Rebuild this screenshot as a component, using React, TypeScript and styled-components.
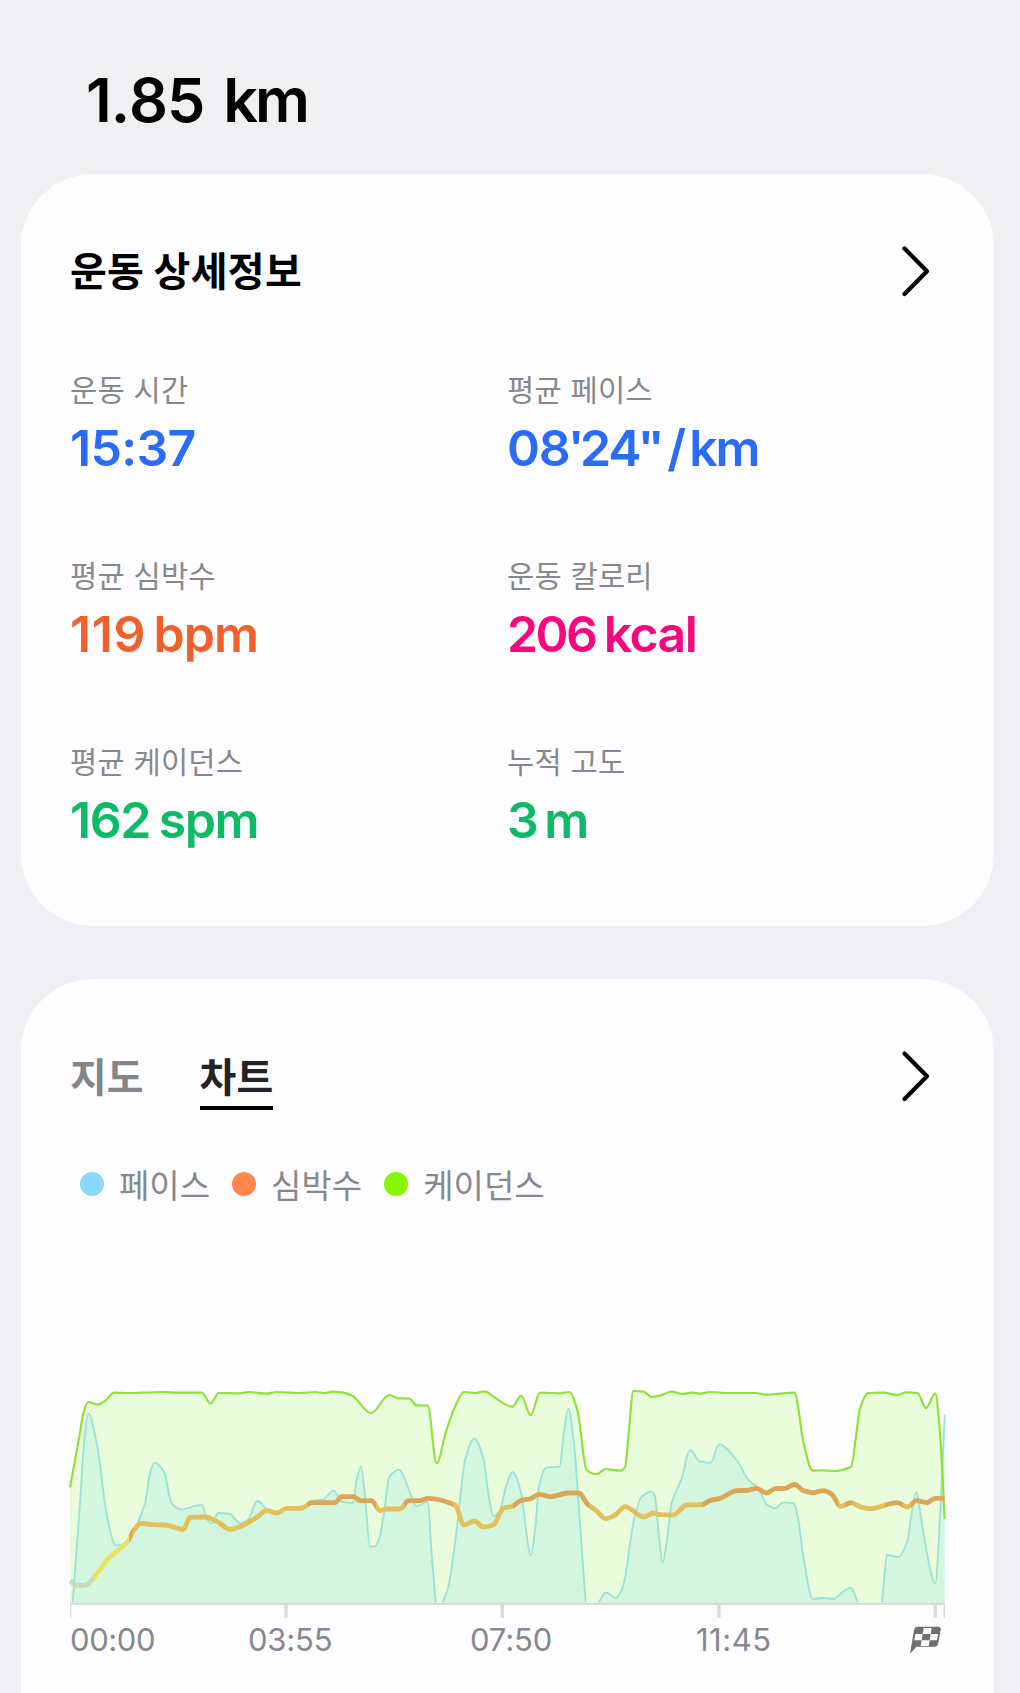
import React from "react";
import styled, { createGlobalStyle } from "styled-components";

const GlobalStyle = createGlobalStyle`
  * { box-sizing: border-box; }
  body {
    margin: 0;
    background: #f0f0f2;
    font-family: Inter, "Noto Sans CJK KR", sans-serif;
  }
`;

const HANGUL = `"Noto Sans CJK KR", sans-serif`;

const Screen = styled.main`
  width: 1020px;
  height: 1693px;
  overflow: hidden;
  padding: 0 26px 0 21px;
  display: flex;
  flex-direction: column;
  background: #f0f0f2;
`;

const Distance = styled.h1`
  flex: none;
  margin: 0;
  height: 174px;
  padding: 70px 0 0 65px;
  display: flex;
  font-size: 61px;
  line-height: 60px;
  font-weight: 600;
  font-kerning: none;
  color: #000;
`;

const Card = styled.section<{ $height: number }>`
  flex: none;
  height: ${(p) => p.$height}px;
  padding: 65px 49px 0;
  border-radius: 72px;
  background: #fdfdff;
  & + & {
    margin-top: 53px;
  }
`;

const CardHeader = styled.header`
  display: flex;
  align-items: center;
  justify-content: space-between;
  height: 64px;
  padding-right: 15px;
`;

const CardTitle = styled.h2`
  margin: 0;
  padding-bottom: 4px;
  font: 700 40px/60px ${HANGUL};
  letter-spacing: 0.3px;
  color: #000;
`;

const Stats = styled.dl`
  margin: 0;
  padding-top: 66px;
  display: grid;
  grid-template-columns: 437px 1fr;
  grid-auto-rows: 186px;
`;

const Stat = styled.div`
  display: flex;
  flex-direction: column;
`;

const StatLabel = styled.dt`
  font: 400 29.6px/40px ${HANGUL};
  letter-spacing: 0.15px;
  word-spacing: 2px;
  color: #88888a;
`;

const StatValue = styled.dd<{ $color: string }>`
  margin: 9px 0 0;
  display: flex;
  font-size: 50px;
  line-height: 60px;
  font-weight: 600;
  color: ${(p) => p.$color};
`;

const Part = styled.span<{ $spacing: number; $gap?: number }>`
  letter-spacing: ${(p) => p.$spacing}px;
  margin-left: ${(p) => p.$gap ?? 0}px;
`;

const Prime = styled(Part)`
  font-family: "Open Sans", sans-serif;
  font-weight: 700;
`;

const Tabs = styled.nav`
  display: flex;
  gap: 56px;
  padding-top: 4px;
`;

const Tab = styled.span<{ $active?: boolean }>`
  height: 64px;
  font: 700 40px/59px ${HANGUL};
  color: ${(p) => (p.$active ? "#242426" : "#858587")};
  border-bottom: 4px solid ${(p) => (p.$active ? "#000" : "transparent")};
`;

const Legend = styled.ul`
  list-style: none;
  margin: 52px 0 0;
  padding: 0 0 0 10px;
  display: flex;
  gap: 22px;
`;

const LegendItem = styled.li<{ $color: string }>`
  display: flex;
  align-items: center;
  gap: 15px;
  font: 400 33px/48px ${HANGUL};
  color: #88888a;
  &::before {
    content: "";
    width: 24px;
    height: 24px;
    border-radius: 50%;
    background: ${(p) => p.$color};
  }
`;

const Plot = styled.svg`
  display: block;
  margin-top: 162px;
  overflow: visible;
`;

const AxisLabels = styled.div`
  display: grid;
  grid-template-columns: 178px 222px 226px 214px auto;
  font-size: 31px;
  line-height: 36px;
  color: #88888a;
`;

const AxisLabel = styled.span<{ $spacing: number }>`
  letter-spacing: ${(p) => p.$spacing}px;
`;

const Flag = styled.svg`
  display: block;
  margin-top: 4px;
`;

type Point = [number, number];

const CADENCE: Point[] = [
  [0, 352], [28, 200], [40, 130], [54, 96], [83, 104], [105, 93], [133, 68], [170, 69], [280, 66],
  [320, 68], [395, 68], [422, 101], [446, 69], [510, 70], [535, 66], [590, 71], [618, 66], [690, 69],
  [735, 66], [765, 69], [790, 65], [816, 67], [845, 76], [903, 129], [958, 75], [985, 85], [1018, 86],
  [1040, 106], [1073, 107], [1100, 280], [1128, 185], [1155, 110], [1182, 66], [1215, 69], [1245, 64],
  [1270, 80], [1327, 110], [1353, 77], [1382, 136], [1410, 68], [1470, 70], [1498, 66], [1522, 120],
  [1550, 300], [1580, 313], [1607, 297], [1650, 302], [1665, 292], [1676, 190], [1690, 63], [1720, 65],
  [1745, 81], [1770, 77], [1805, 65], [1835, 72], [1865, 68], [1890, 71], [1920, 66], [1970, 69],
  [2055, 69], [2090, 74], [2175, 68], [2184, 110], [2200, 215], [2228, 302], [2260, 301], [2290, 303],
  [2343, 290], [2358, 200], [2370, 115], [2395, 69], [2440, 68], [2482, 75], [2508, 67], [2542, 69],
  [2568, 114], [2596, 70], [2610, 190], [2624, 446],
];

const PACE: Point[][] = [
  [
    [8, 697], [30, 400], [42, 220], [55, 131], [83, 235], [100, 365], [115, 460], [137, 526], [155, 524],
    [175, 508], [205, 455], [225, 400], [240, 310], [253, 278], [282, 305], [305, 400], [335, 418],
    [395, 404], [410, 445], [423, 461], [445, 429], [480, 432], [510, 460], [535, 448], [562, 393],
    [590, 417], [618, 427], [650, 416], [700, 408], [725, 393], [760, 388], [790, 362], [815, 394],
    [848, 399], [860, 330], [873, 290], [885, 380], [900, 530], [915, 529], [930, 498], [943, 420],
    [958, 320], [988, 299], [1015, 355], [1040, 409], [1073, 395], [1085, 550], [1097, 697],
  ],
  [
    [1118, 697], [1135, 650], [1155, 520], [1170, 390], [1185, 270], [1213, 205], [1240, 265],
    [1255, 370], [1270, 438], [1290, 420], [1308, 350], [1327, 306], [1355, 375], [1368, 480],
    [1382, 558], [1395, 480], [1407, 350], [1428, 293], [1469, 290], [1480, 200], [1495, 116],
    [1512, 220], [1525, 390], [1547, 697],
  ],
  [
    [1587, 697], [1607, 667], [1638, 684], [1655, 660], [1666, 620], [1680, 520], [1695, 435],
    [1715, 380], [1745, 365], [1755, 380], [1765, 480], [1778, 577], [1792, 500], [1805, 400],
    [1835, 325], [1860, 240], [1890, 275], [1922, 278], [1947, 223], [2000, 270], [2035, 330],
    [2065, 355], [2090, 403], [2115, 415], [2140, 397], [2172, 400], [2185, 450], [2200, 560],
    [2228, 687], [2260, 684], [2290, 687], [2325, 660], [2343, 653], [2363, 697],
  ],
  [
    [2436, 697], [2452, 555], [2485, 561], [2513, 510], [2525, 430], [2540, 365], [2550, 420],
    [2567, 530], [2596, 640], [2610, 440], [2624, 133],
  ],
];

const HEART: Point[] = [
  [0, 632], [20, 646], [45, 646], [72, 622], [115, 566], [175, 512], [190, 482], [215, 460], [250, 464],
  [285, 465], [340, 478], [360, 442], [405, 441], [445, 457], [480, 478], [510, 470], [560, 442],
  [590, 422], [620, 429], [650, 415], [695, 415], [725, 398], [795, 398], [815, 380], [850, 380],
  [872, 392], [905, 392], [930, 422], [950, 417], [990, 417], [1015, 392], [1050, 392], [1073, 385],
  [1155, 405], [1182, 465], [1213, 453], [1240, 471], [1270, 465], [1300, 415], [1327, 409],
  [1353, 391], [1380, 387], [1407, 373], [1440, 380], [1495, 369], [1527, 369], [1552, 402],
  [1580, 423], [1607, 446], [1635, 435], [1665, 410], [1722, 441], [1750, 429], [1770, 434],
  [1810, 435], [1850, 405], [1895, 404], [1922, 391], [1950, 385], [2000, 362], [2035, 361],
  [2060, 355], [2090, 369], [2115, 356], [2145, 355], [2173, 343], [2200, 362], [2230, 368],
  [2260, 362], [2285, 372], [2312, 409], [2343, 398], [2375, 412], [2400, 416], [2483, 398],
  [2512, 411], [2540, 392], [2570, 398], [2595, 385], [2624, 385],
];

/* Heart-rate zone colours, each up to the given x. */
const ZONES: [number, string][] = [
  [72, "#c9dab6"], [176, "#e6e561"], [190, "#dfb05a"], [715, "#e2c15c"], [918, "#dba657"],
  [1003, "#e2c15c"], [1148, "#dba657"], [1330, "#e2c15c"], [1556, "#dba657"], [1897, "#e2c15c"],
  [2305, "#dba657"], [2325, "#e2c15c"], [2350, "#dba657"], [2445, "#e2c15c"], [2498, "#dba657"],
  [2522, "#e2c15c"], [2628, "#dba657"],
];

/* Monotone cubic interpolation, so that peaks are rounded but never overshot. */
function curve(points: Point[]): string {
  const n = points.length;
  const slope = points.slice(1).map(([x, y], i) => (y - points[i][1]) / (x - points[i][0]));
  const tangent = points.map((_, i) => {
    if (i === 0) return slope[0];
    if (i === n - 1) return slope[n - 2];
    const a = slope[i - 1];
    const b = slope[i];
    return a * b <= 0 ? 0 : (2 * a * b) / (a + b);
  });
  let d = `M${points[0][0]},${points[0][1]}`;
  for (let i = 1; i < n; i++) {
    const [x0, y0] = points[i - 1];
    const [x1, y1] = points[i];
    const h = (x1 - x0) / 3;
    d += `C${x0 + h},${y0 + tangent[i - 1] * h} ${x1 - h},${y1 - tangent[i] * h} ${x1},${y1}`;
  }
  return d;
}

function area(points: Point[]): string {
  return `${curve(points)}L${points[points.length - 1][0]},700L${points[0][0]},700Z`;
}

const Chevron = () => (
  <svg width="30" height="52" viewBox="0 0 30 52" fill="none" stroke="#000" strokeWidth="4.2" strokeLinecap="round" strokeLinejoin="round">
    <path d="M4.5 3.4 27 26.2 4.5 49" />
  </svg>
);

const FinishFlag = () => (
  <Flag width="31" height="28" viewBox="0 0 93 84">
    <path d="M24 2H85Q94 2 92 11L84 55Q82 62 75 62H19L2 82Q0 83 1 78L12 12Q14 2 24 2Z" fill="#707070" />
    <path d="M41 6H65L62 24H84L81 43H59L56 60H32L35 43H13L16 24H38Z" fill="#fdfdff" />
    <path d="M38 24H62L59 43H35Z" fill="#707070" />
  </Flag>
);

const Chart = () => (
  <Plot width="876" height="252" viewBox="0 0 2628 756">
    <defs>
      <linearGradient id="zones" gradientUnits="userSpaceOnUse" x1="0" y1="0" x2="2628" y2="0">
        {ZONES.map(([end, color], i) => (
          <React.Fragment key={end}>
            <stop offset={(i ? ZONES[i - 1][0] : 0) / 2628} stopColor={color} />
            <stop offset={end / 2628} stopColor={color} />
          </React.Fragment>
        ))}
      </linearGradient>
    </defs>
    <path d={area(CADENCE)} fill="#e9fddd" />
    {PACE.map((run, i) => (
      <path key={i} d={area(run)} fill="#d2f6de" />
    ))}
    <g fill="none" strokeLinejoin="round">
      {PACE.map((run, i) => (
        <path key={i} d={curve(run)} stroke="#9ce1d6" strokeWidth="5.5" />
      ))}
      <path d={curve(CADENCE)} stroke="#8de336" strokeWidth="6.5" />
      <path d={curve(HEART)} stroke="url(#zones)" strokeWidth="14.5" />
    </g>
    <g fill="#dadadc">
      <rect x="0" y="698" width="2625" height="7" />
      <rect x="0" y="700" width="4" height="43" />
      <rect x="643" y="700" width="10" height="43" />
      <rect x="1292" y="700" width="10" height="43" />
      <rect x="1942" y="700" width="10" height="43" />
      <rect x="2591" y="700" width="10" height="43" />
      <rect x="2621" y="700" width="4" height="43" />
    </g>
  </Plot>
);

interface MetricProps {
  label: string;
  color: string;
  children: React.ReactNode;
}

const Metric = ({ label, color, children }: MetricProps) => (
  <Stat>
    <StatLabel>{label}</StatLabel>
    <StatValue $color={color}>{children}</StatValue>
  </Stat>
);

export default function App() {
  return (
    <Screen>
      <GlobalStyle />
      <Distance>
        <Part $spacing={-1.1}>1.85</Part>
        <Part $spacing={-3} $gap={19}>km</Part>
      </Distance>
      <Card $height={752}>
        <CardHeader>
          <CardTitle>운동 상세정보</CardTitle>
          <Chevron />
        </CardHeader>
        <Stats>
          <Metric label="운동 시간" color="#2b6cf6">
            <Part $spacing={-0.7}>15:37</Part>
          </Metric>
          <Metric label="평균 페이스" color="#2b6cf6">
            <Part $spacing={-1.3}>08</Part>
            <Prime $spacing={-2.6}>'</Prime>
            <Part $spacing={-2.3}>24</Part>
            <Prime $spacing={-2.6}>"</Prime>
            <Part $spacing={3} $gap={7}>/</Part>
            <Part $spacing={-2}>km</Part>
          </Metric>
          <Metric label="평균 심박수" color="#f0602b">
            <Part $spacing={0.6}>119</Part>
            <Part $spacing={-1} $gap={7.5}>bpm</Part>
          </Metric>
          <Metric label="운동 칼로리" color="#f9067f">
            <Part $spacing={-2.6}>206</Part>
            <Part $spacing={-1.6} $gap={8.5}>kcal</Part>
          </Metric>
          <Metric label="평균 케이던스" color="#0dbb66">
            <Part $spacing={-1.5}>162</Part>
            <Part $spacing={-1.5} $gap={9}>spm</Part>
          </Metric>
          <Metric label="누적 고도" color="#0dbb66">
            <Part $spacing={-1.5}>3</Part>
            <Part $spacing={-1} $gap={7}>m</Part>
          </Metric>
        </Stats>
      </Card>
      <Card $height={900}>
        <CardHeader>
          <Tabs>
            <Tab>지도</Tab>
            <Tab $active>차트</Tab>
          </Tabs>
          <Chevron />
        </CardHeader>
        <Legend>
          <LegendItem $color="#8adafd">페이스</LegendItem>
          <LegendItem $color="#ff864d">심박수</LegendItem>
          <LegendItem $color="#85f704">케이던스</LegendItem>
        </Legend>
        <Chart />
        <AxisLabels>
          <AxisLabel $spacing={-0.4}>00:00</AxisLabel>
          <AxisLabel $spacing={-0.2}>03:55</AxisLabel>
          <AxisLabel $spacing={-0.1}>07:50</AxisLabel>
          <AxisLabel $spacing={0.5}>11:45</AxisLabel>
          <FinishFlag />
        </AxisLabels>
      </Card>
    </Screen>
  );
}
